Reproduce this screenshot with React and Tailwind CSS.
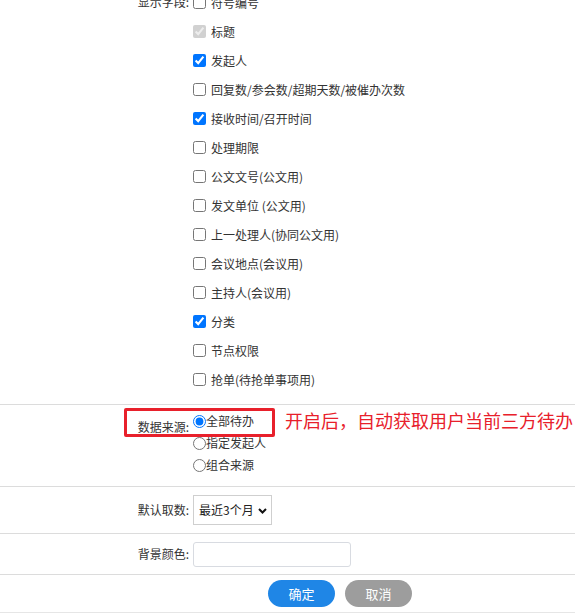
import React from 'react';

const fields = [
  { label: '符号编号' },
  { label: '标题', checked: true, disabled: true },
  { label: '发起人', checked: true },
  { label: '回复数/参会数/超期天数/被催办次数' },
  { label: '接收时间/召开时间', checked: true },
  { label: '处理期限' },
  { label: '公文文号(公文用)' },
  { label: '发文单位 (公文用)' },
  { label: '上一处理人(协同公文用)' },
  { label: '会议地点(会议用)' },
  { label: '主持人(会议用)' },
  { label: '分类', checked: true },
  { label: '节点权限' },
  { label: '抢单(待抢单事项用)' },
];

const sources = ['全部待办', '指定发起人', '组合来源'];

const font = { fontFamily: '"Noto Sans CJK SC", "Liberation Sans", sans-serif' };

const Label = ({ children, className = '' }) => (
  <div className={`w-[189px] shrink-0 text-right text-[12px] leading-[12px] text-[#333] ${className}`}>
    {children}
  </div>
);

export default function App() {
  return (
    <div className="w-[575px] h-[614px] overflow-hidden bg-white" style={font}>
      <div className="-mt-[12px]">
        {/* 显示字段 */}
        <div className="flex pb-[10px] border-b border-[#dcdcdc]">
          <Label className="pt-[8px]">显示字段:</Label>
          <div className="flex flex-col">
            {fields.map((f) => (
              <label key={f.label} className="h-[29px] flex items-center">
                <input
                  type="checkbox"
                  defaultChecked={f.checked}
                  disabled={f.disabled}
                  className="ml-[4px] w-[13px] h-[13px]"
                />
                <span className="ml-[5px] text-[12px] leading-[12px] text-[#333]">{f.label}</span>
              </label>
            ))}
          </div>
        </div>

        {/* 数据来源 */}
        <div className="relative flex pt-[5px] pb-[10px] border-b border-[#dcdcdc]">
          <Label className="pt-[11px]">数据来源:</Label>
          <div className="flex flex-col">
            {sources.map((s, i) => (
              <label key={s} className="h-[22px] flex items-center">
                <input
                  type="radio"
                  name="source"
                  defaultChecked={i === 0}
                  className="ml-[4px] w-[13px] h-[13px]"
                />
                <span className="text-[12px] leading-[12px] text-[#333]">{s}</span>
              </label>
            ))}
          </div>
          <div className="absolute left-[124px] top-[3px] w-[151px] h-[29px] border-[3px] border-[#e8202b] rounded-[2px]" />
          <div className="absolute left-[285px] top-[6px] text-[18px] leading-[18px] text-[#e8202b] whitespace-nowrap">
            开启后，自动获取用户当前三方待办
          </div>
        </div>

        {/* 默认取数 */}
        <div className="flex items-center h-[47px] border-b border-[#dcdcdc]">
          <Label>默认取数:</Label>
          <div className="relative ml-[4px] w-[79px] h-[30px] border border-[#cfcfcf] flex items-center">
            <span className="ml-[5px] text-[12px] leading-[12px] text-[#222]">最近3个月</span>
            <svg
              className="absolute left-[64px] top-[12px]"
              width="9"
              height="6"
              viewBox="0 0 9 6"
              fill="none"
            >
              <path d="M1 1l3.5 3.5L8 1" stroke="#111" strokeWidth="2" />
            </svg>
          </div>
        </div>

        {/* 背景颜色 */}
        <div className="flex items-center h-[41px] border-b border-[#dcdcdc]">
          <Label>背景颜色:</Label>
          <input
            type="text"
            className="ml-[4px] w-[158px] h-[25px] border border-[#d8dbe1] rounded-[3px] outline-none"
          />
        </div>

        {/* 操作按钮 */}
        <div className="flex items-center gap-[10px] pl-[268px] h-[38px] border-b border-[#e6e6e6]">
          <button className="w-[67px] h-[27px] rounded-full bg-[#1f86e6] text-white text-[13px] leading-[13px]">
            确定
          </button>
          <button className="w-[67px] h-[27px] rounded-full bg-[#9d9d9d] text-white text-[13px] leading-[13px]">
            取消
          </button>
        </div>
      </div>
    </div>
  );
}
